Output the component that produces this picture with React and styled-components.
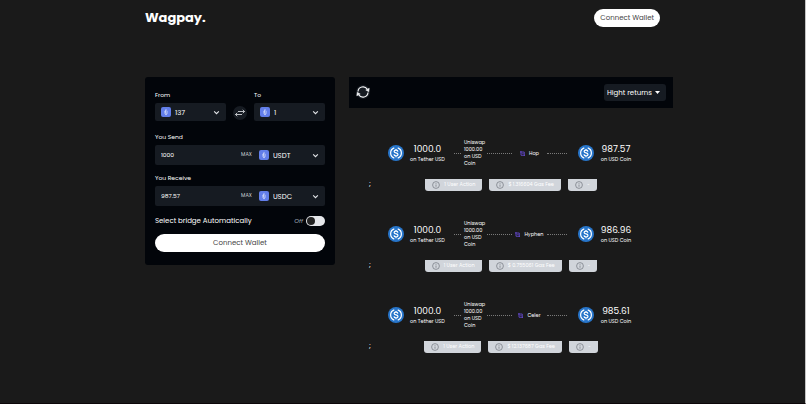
import React, { useState } from 'react';
import styled, { createGlobalStyle } from 'styled-components';

const routes = [
  { id: 1, bridge: 'Hop', amount: '987.57', fee: '$ 1.316604 Gas Fee' },
  { id: 2, bridge: 'Hyphen', amount: '986.96', fee: '$ 0.755061 Gas Fee' },
  { id: 3, bridge: 'Celer', amount: '985.61', fee: '$ 12.137687 Gas Fee' },
];

const EthIcon = () => (
  <TokenBadge viewBox="0 0 20 20" aria-hidden="true">
    <rect width="20" height="20" rx="4" fill="#627eea" />
    <path d="M10 3.5 6 10.3l4 2.3 4-2.3z" fill="#c6d1f8" />
    <path d="M10 3.5v9.1l4-2.3z" fill="#8fa3f0" />
    <path d="m6 11.4 4 5.2 4-5.2-4 2.3z" fill="#e3e8fc" />
  </TokenBadge>
);

const Chevron = () => (
  <ChevronSvg viewBox="0 0 12 12" aria-hidden="true">
    <path d="m2 4 4 4 4-4" fill="none" stroke="#e5e7eb" strokeWidth="1.9" />
  </ChevronSvg>
);

const UsdCoin = () => (
  <CoinSvg viewBox="0 0 32 32" aria-hidden="true">
    <circle cx="16" cy="16" r="16" fill="#2775ca" />
    <g fill="none" stroke="#fff" strokeWidth="2.4">
      <path d="M12.5 5.8a10.8 10.8 0 0 0 0 20.4M19.5 5.8a10.8 10.8 0 0 1 0 20.4" />
      <path d="M19.8 13.2c-.2-2-1.8-2.9-3.8-2.9-2.300 0-3.800 1-3.800 2.700 0 4.200 7.800 1.600 7.800 5.900 0 1.800-1.600 2.900-4 2.900-2.300 0-3.900-1-4.100-3.100M16 7.800v2.500M16 21.800v2.500" />
    </g>
  </CoinSvg>
);

const InfoIcon = () => (
  <InfoSvg viewBox="0 0 16 16" aria-hidden="true">
    <circle cx="8" cy="8" r="6.8" fill="none" stroke="#777b83" strokeWidth="1.5" />
    <path d="M8 7v4.5M8 4.300v1.500" stroke="#777b83" strokeWidth="1.5" />
  </InfoSvg>
);

const ChainSelect = ({ id, label, value }) => (
  <Field>
    <Label htmlFor={id}>{label}</Label>
    <Box>
      <EthIcon />
      <Select id={id} defaultValue={value}>
        <option>{value}</option>
      </Select>
      <Chevron />
    </Box>
  </Field>
);

const AmountField = ({ id, label, value, token }) => (
  <Field>
    <Label htmlFor={id}>{label}</Label>
    <Box $tall>
      <AmountInput id={id} type="text" defaultValue={value} />
      <MaxButton type="button">MAX</MaxButton>
      <TokenPicker>
        <EthIcon />
        <Select aria-label={`${label} token`} defaultValue={token}>
          <option>{token}</option>
        </Select>
        <Chevron />
      </TokenPicker>
    </Box>
  </Field>
);

const Route = ({ bridge, amount, fee }) => (
  <RouteItem>
    <RoutePath>
      <UsdCoin />
      <Amount $inset>
        <strong>1000.0</strong>
        <span>on Tether USD</span>
      </Amount>
      <Dash />
      <Swap>Uniswap 1000.00 on USD Coin</Swap>
      <Dash />
      <Bridge>
        <BridgeSvg viewBox="0 0 10 10" aria-hidden="true">
          <path d="M0 2h8.500v8M2 0v8.500h8" fill="none" stroke="#6d4fe0" strokeWidth="1.600" />
          <path d="M3 5h5" stroke="#4a389c" strokeWidth="1.500" />
        </BridgeSvg>
        {bridge}
      </Bridge>
      <Dash />
      <UsdCoin />
      <Amount>
        <strong>{amount}</strong>
        <span>on USD Coin</span>
      </Amount>
    </RoutePath>
    <RouteFooter>
      <span>;</span>
      <Tags>
        <Tag><InfoIcon />1 User Action</Tag>
        <Tag><InfoIcon />{fee}</Tag>
        <Tag><InfoIcon />~</Tag>
      </Tags>
    </RouteFooter>
  </RouteItem>
);

const App = () => {
  const [auto, setAuto] = useState(false);

  return (
    <Page>
      <GlobalStyle />
      <Header>
        <Logo>Wagpay.</Logo>
        <WalletButton type="button">Connect Wallet</WalletButton>
      </Header>
      <Main>
        <Card>
          <ChainRow>
            <ChainSelect id="from" label="From" value="137" />
            <RoundButton type="button" aria-label="Swap chains">
              <svg width="10" height="10" viewBox="0 0 20 20" fill="none" stroke="#e5e7eb" strokeWidth="1.6">
                <path d="M6 7h13M15.500 3.500 19 7l-3.500 3.500M14 13H1M4.500 9.500 1 13l3.500 3.500" />
              </svg>
            </RoundButton>
            <ChainSelect id="to" label="To" value="1" />
          </ChainRow>
          <AmountField id="send" label="You Send" value="1000" token="USDT" />
          <AmountField id="receive" label="You Receive" value="987.57" token="USDC" />
          <AutoRow>
            <label htmlFor="auto">Select bridge Automatically</label>
            <AutoState>{auto ? 'On' : 'Off'}</AutoState>
            <Toggle id="auto" type="checkbox" checked={auto} onChange={(e) => setAuto(e.target.checked)} />
          </AutoRow>
          <WalletButton type="button">Connect Wallet</WalletButton>
        </Card>
        <section>
          <Toolbar>
            <RoundButton type="button" aria-label="Refresh routes">
              <svg width="14" height="14" viewBox="0 0 28 28" fill="none" stroke="#f3f4f6" strokeWidth="2.4">
                <path d="M4 13a10 10 0 0 1 18.500-4.500M24 15a10 10 0 0 1-18.500 4.500" />
                <path d="m26.500 6.500-1 7-6-3.500zM1.500 21.500l1-7 6 3.500z" fill="#f3f4f6" strokeWidth="1" />
              </svg>
            </RoundButton>
            <SortBox>
              <Select aria-label="Sort routes" defaultValue="Hight returns">
                <option>Hight returns</option>
              </Select>
              <svg width="5" height="3" viewBox="0 0 10 6" aria-hidden="true">
                <path d="M0 0h10L5 6z" fill="#fff" />
              </svg>
            </SortBox>
          </Toolbar>
          <RouteList>
            {routes.map((route) => (
              <Route key={route.id} {...route} />
            ))}
          </RouteList>
        </section>
      </Main>
    </Page>
  );
};

// Styled Components
const GlobalStyle = createGlobalStyle`
  * {
    box-sizing: border-box;
  }

  body {
    margin: 0;
    background-color: #1a1a1a;
  }

  body, button, input, select {
    font-family: Poppins, Inter, "Liberation Sans", sans-serif;
  }
`;

const Page = styled.div`
  min-height: 100vh;
  border-right: 1px solid #c4c4c4;
  border-bottom: 1px solid #0c0709;
  background-color: #1a1a1a;
  color: #fff;
  font-size: 7px;
  line-height: 10px;
`;

const Header = styled.header`
  display: flex;
  align-items: center;
  justify-content: space-between;
  padding: 8px 18%;
`;

const Logo = styled.h1`
  margin: 0;
  font-size: 13px;
  line-height: 20px;
  font-weight: 700;
`;

const WalletButton = styled.button`
  height: 18px;
  padding: 0 6px;
  border: none;
  border-radius: 9px;
  background-color: #fff;
  color: #444;
  font-size: 7px;
  cursor: pointer;
`;

const Main = styled.main`
  display: grid;
  grid-template-columns: minmax(0, 190fr) minmax(0, 324fr);
  align-items: start;
  gap: 14px;
  padding: 41px 16.4% 0 18%;
`;

const Card = styled.section`
  display: flex;
  flex-direction: column;
  gap: 8px;
  padding: 13px 10px;
  border-radius: 3px;
  background-color: #02050a;
`;

const ChainRow = styled.div`
  display: grid;
  grid-template-columns: minmax(0, 1fr) auto minmax(0, 1fr);
  align-items: end;
  gap: 7px;
  margin-bottom: 3px;
`;

const Field = styled.div`
  display: flex;
  flex-direction: column;
  gap: 3px;
  min-width: 0;
`;

const Label = styled.label`
  font-size: 6px;
`;

const Box = styled.div`
  display: flex;
  align-items: center;
  gap: 4px;
  height: ${props => (props.$tall ? '20px' : '18px')};
  padding: 0 6px;
  border-radius: 2px;
  background-color: #161b22;
`;

const Select = styled.select`
  flex: 1;
  min-width: 0;
  padding: 0;
  border: none;
  appearance: none;
  background: transparent;
  color: #fff;
  font-size: 7px;
`;

const AmountInput = styled.input`
  flex: 1;
  min-width: 0;
  padding: 0;
  border: none;
  background: transparent;
  color: #fff;
  font-size: 6px;
`;

const MaxButton = styled.button`
  padding: 0;
  border: none;
  background: transparent;
  color: #d1d5db;
  font-size: 5px;
`;

const TokenPicker = styled.div`
  display: flex;
  align-items: center;
  gap: 4px;
  width: 38%;
  margin-left: 3px;
`;

const TokenBadge = styled.svg`
  flex: none;
  width: 10px;
  height: 10px;
`;

const ChevronSvg = styled.svg`
  flex: none;
  width: 7px;
  height: 7px;
  pointer-events: none;
`;

const RoundButton = styled.button`
  display: grid;
  place-items: center;
  width: 14px;
  height: 14px;
  margin-bottom: 1px;
  padding: 0;
  border: none;
  border-radius: 50%;
  background-color: #161b22;
  cursor: pointer;
`;

const AutoRow = styled.div`
  display: flex;
  align-items: center;
  gap: 3px;
  margin-top: 2px;

  label {
    flex: 1;
  }
`;

const AutoState = styled.span`
  color: #9ca3af;
  font-size: 6px;
  font-style: italic;
`;

const Toggle = styled.input`
  width: 19px;
  height: 10px;
  margin: 0;
  padding: 1px;
  border-radius: 5px;
  appearance: none;
  background-color: #e5e7eb;
  cursor: pointer;

  &::before {
    content: '';
    display: block;
    width: 8px;
    height: 8px;
    border-radius: 50%;
    background-color: #222;
  }

  &:checked::before {
    margin-left: auto;
  }
`;

const Toolbar = styled.div`
  display: flex;
  align-items: center;
  justify-content: space-between;
  padding: 7px;
  background-color: #02050a;
`;

const SortBox = styled.div`
  display: flex;
  align-items: center;
  gap: 3px;
  height: 17px;
  padding: 0 6px 0 3px;
  border-radius: 3px;
  background-color: #161b22;
`;

const RouteList = styled.ul`
  display: flex;
  flex-direction: column;
  gap: 29px;
  margin: 0;
  padding: 31px 20px 0;
  list-style: none;
`;

const RouteItem = styled.li`
  display: flex;
  flex-direction: column;
  gap: 12px;
`;

const RoutePath = styled.div`
  display: grid;
  grid-template-columns: 16px 50px 7px 26px 25px 35px 20px 27px 44px;
  align-items: center;
  justify-content: center;
  padding-left: 4px;
  font-size: 5px;
  line-height: 7px;
`;

const CoinSvg = styled.svg`
  width: 16px;
  height: 16px;
  justify-self: end;
`;

const Amount = styled.div`
  display: flex;
  flex-direction: column;
  gap: 2px;
  align-items: center;
  padding-right: ${props => (props.$inset ? '3px' : '0')};
  white-space: nowrap;

  strong {
    font-size: 9px;
    line-height: 10px;
    font-weight: 400;
  }
`;

const Dash = styled.div`
  border-top: 1px dotted #7a7a7a;
`;

const Swap = styled.div`
  padding-left: 3px;
`;

const Bridge = styled.div`
  display: flex;
  align-items: center;
  justify-content: center;
  gap: 4px;
`;

const BridgeSvg = styled.svg`
  width: 5px;
  height: 5px;
`;

const RouteFooter = styled.div`
  display: grid;
  grid-template-columns: 1fr auto 1fr;
`;

const Tags = styled.div`
  display: flex;
  gap: 7px;
`;

const Tag = styled.span`
  display: flex;
  align-items: center;
  gap: 4px;
  height: 12px;
  padding: 0 7px;
  border-radius: 0 0 3px 3px;
  background-color: #d1d5db;
  color: #fff;
  font-size: 5px;
`;

const InfoSvg = styled.svg`
  width: 8px;
  height: 8px;
`;

export default App;
